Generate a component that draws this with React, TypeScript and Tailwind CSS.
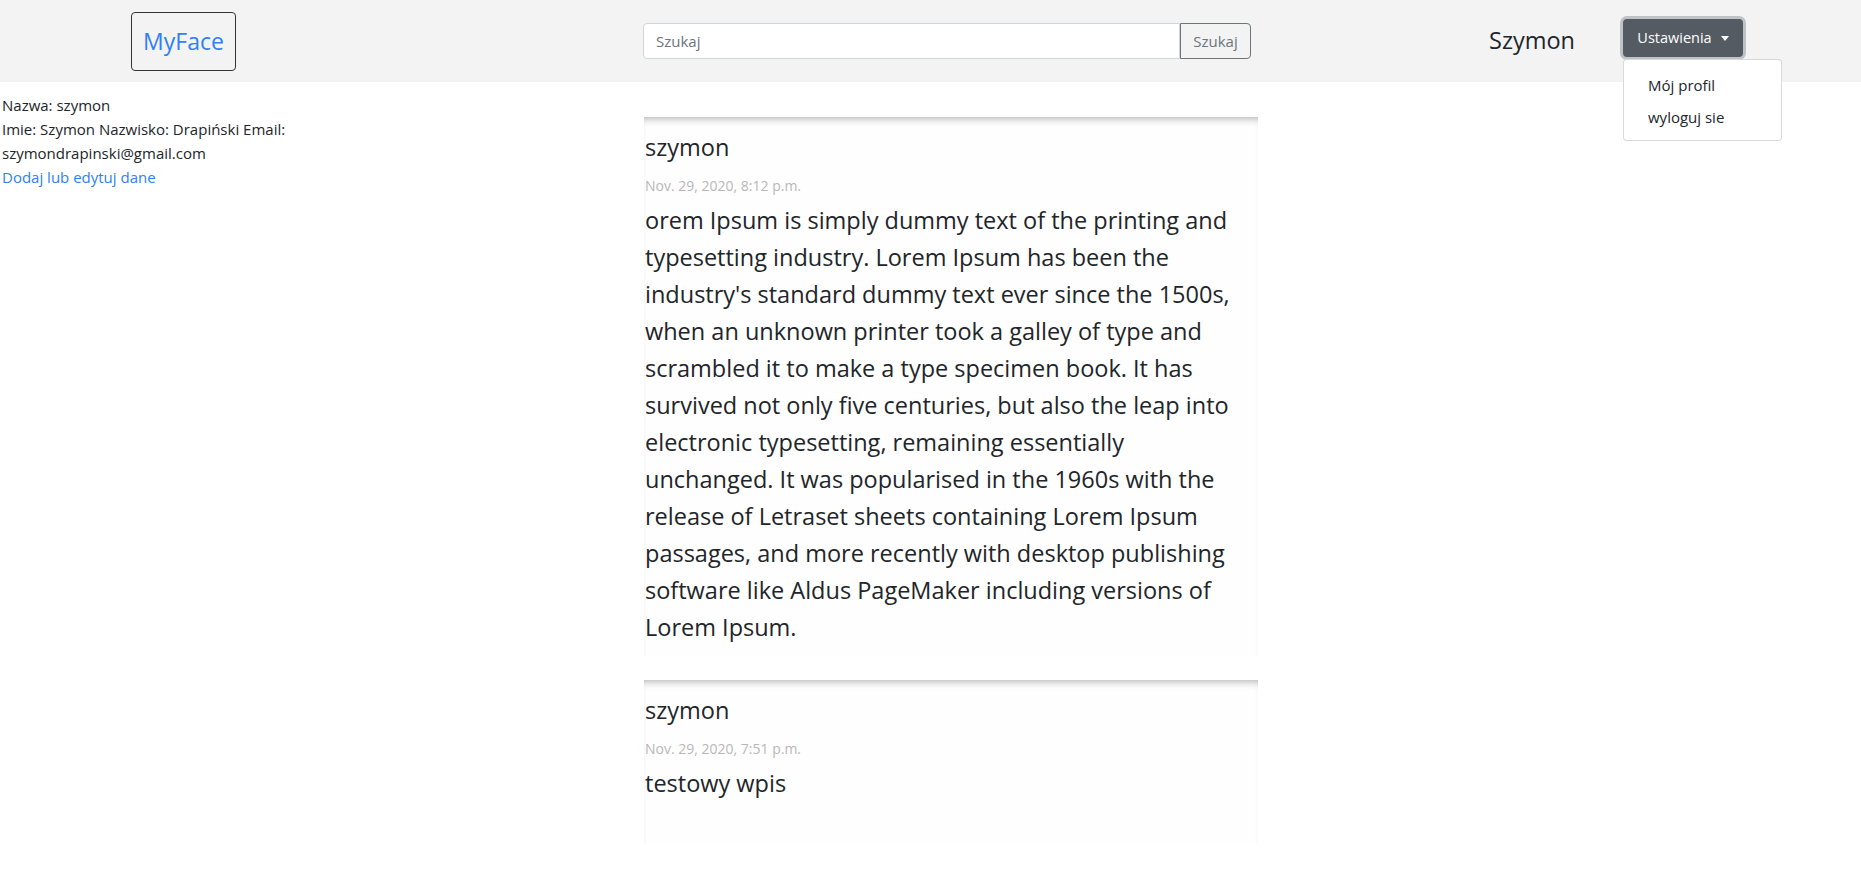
import { useState } from "react";

const posts = [
  {
    author: "szymon",
    date: "Nov. 29, 2020, 8:12 p.m.",
    body: "orem Ipsum is simply dummy text of the printing and typesetting industry. Lorem Ipsum has been the industry's standard dummy text ever since the 1500s, when an unknown printer took a galley of type and scrambled it to make a type specimen book. It has survived not only five centuries, but also the leap into electronic typesetting, remaining essentially unchanged. It was popularised in the 1960s with the release of Letraset sheets containing Lorem Ipsum passages, and more recently with desktop publishing software like Aldus PageMaker including versions of Lorem Ipsum.",
  },
  {
    author: "szymon",
    date: "Nov. 29, 2020, 7:51 p.m.",
    body: "testowy wpis",
  },
];

function Header() {
  const [open, setOpen] = useState(true);

  return (
    <header className="flex h-[82px] items-center bg-[#f3f3f3]">
      <div className="w-[643px] pl-[131px]">
        <a
          href="#"
          className="flex h-[59px] w-[105px] items-center justify-center rounded-[4px] border border-[#333] text-[23px] text-[#2f7ff8]"
        >
          MyFace
        </a>
      </div>

      <form className="flex h-[36px] w-[608px]" onSubmit={(e) => e.preventDefault()}>
        <input
          type="text"
          placeholder="Szukaj"
          className="h-full flex-1 rounded-l-[4px] border border-[#ced4da] bg-white px-3 text-[15px] text-[#495057] placeholder:text-[#6c757d] focus:outline-none"
        />
        <button
          type="submit"
          className="h-full w-[71px] rounded-r-[4px] border border-[#6c757d] text-[15px] text-[#6c757d]"
        >
          Szukaj
        </button>
      </form>

      <div className="ml-[238px] w-[134px] text-[23.5px] leading-none text-[#212529]">Szymon</div>

      <div className="relative mt-[-6px]">
        <button
          onClick={() => setOpen((v) => !v)}
          className="flex h-[38px] w-[120px] items-center justify-center gap-[9px] rounded-[4px] bg-[#545b62] text-[14.5px] text-white shadow-[0_0_0_3px_rgba(130,138,145,0.45)]"
        >
          Ustawienia
          <span className="h-0 w-0 border-x-[4px] border-t-[5px] border-x-transparent border-t-white" />
        </button>
        {open && (
          <div className="absolute left-0 top-[40px] z-10 w-[159px] rounded-[4px] border border-black/15 bg-white pb-[7px] pt-[9px]">
            <a href="#" className="block px-6 text-[15px] leading-[32px] text-[#212529]">
              Mój profil
            </a>
            <a href="#" className="block px-6 text-[15px] leading-[32px] text-[#212529]">
              wyloguj sie
            </a>
          </div>
        )}
      </div>
    </header>
  );
}

function Post({ author, date, body }: { author: string; date: string; body: string }) {
  return (
    <article className="bg-[#fefefe] pb-[10px] pl-[1px] pr-[8px] pt-[12px] shadow-[inset_0_7px_8px_-6px_rgba(0,0,0,0.35)] last:pb-[42px]">
      <h3 className="text-[23.5px] leading-[36px] text-[#212529]">{author}</h3>
      <div className="mt-[10px] text-[14px] leading-[21px] text-[#b8b8b8]">{date}</div>
      <p className="mt-[6px] text-[23.5px] leading-[37px] text-[#212529]">{body}</p>
    </article>
  );
}

export default function App() {
  return (
    <div className="min-h-screen bg-white font-['Open_Sans','Liberation_Sans',sans-serif] text-[#212529]">
      <Header />
      <div className="flex">
        <aside className="w-[300px] pl-[2px] pt-[11px] text-[15px] leading-[24px]">
          <p>Nazwa: szymon</p>
          <p>Imie: Szymon Nazwisko: Drapiński Email: szymondrapinski@gmail.com</p>
          <a href="#" className="text-[#2f7ff8]">
            Dodaj lub edytuj dane
          </a>
        </aside>
        <main className="ml-[344px] flex w-[614px] flex-col gap-[24px] pt-[35px]">
          {posts.map((p, i) => (
            <Post key={i} {...p} />
          ))}
        </main>
      </div>
    </div>
  );
}
